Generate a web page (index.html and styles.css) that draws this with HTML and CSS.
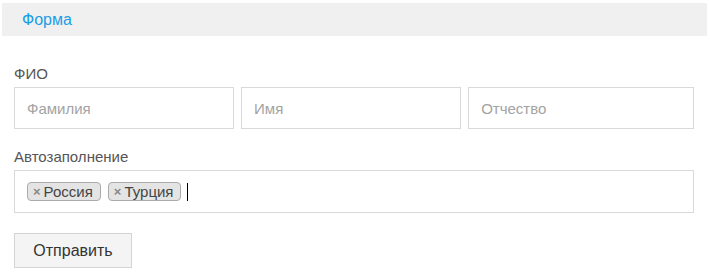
FILE: index.html
```html
<!DOCTYPE html>
<html lang="ru">
<head>
<meta charset="utf-8">
<link rel="stylesheet" href="styles.css">
</head>
<body>
<div class="tabbar"><span class="tab">Форма</span></div>
<form class="form">
  <div class="group fio">
    <div class="label">ФИО</div>
    <div class="row">
      <div class="input placeholder">Фамилия</div>
      <div class="input placeholder">Имя</div>
      <div class="input placeholder wide">Отчество</div>
    </div>
  </div>
  <div class="group auto">
    <div class="label">Автозаполнение</div>
    <div class="input tags">
      <span class="tag"><span class="x">×</span>Россия</span>
      <span class="tag"><span class="x">×</span>Турция</span>
      <span class="caret"></span>
    </div>
  </div>
  <div class="actions"><span class="btn">Отправить</span></div>
</form>
</body>
</html>
```
FILE: styles.css
```css
html, body { margin: 0; padding: 0; background: #fff; }
body { font-family: "Liberation Sans", Arial, sans-serif; font-size: 15px; color: #555; }
.tabbar { margin: 3px 3px 0 2px; height: 33px; background: #f0f0f0; display: flex; align-items: center; padding-left: 20px; }
.tab { color: #1a9ee6; font-size: 16px; }
.form { padding: 0 16px 0 14px; }
.group.fio { margin-top: 30px; }
.label { font-size: 15px; color: #555; line-height: 16px; height: 16px; margin-bottom: 5px; }
.row { display: flex; gap: 7px; }
.input { box-sizing: border-box; border: 1px solid #d9d9d9; height: 42px; display: flex; align-items: center; padding: 0 12px; flex: 1 1 0; }
.input.wide { flex: 1.03 1 0; }
.placeholder { color: #a3a3a3; font-size: 15px; }
.group.auto { margin-top: 20px; }
.input.tags { height: 43px; padding: 0 12px; gap: 7px; }
.tag { display: inline-flex; align-items: center; height: 19px; box-sizing: border-box; border: 1px solid #aaa; border-radius: 4px; background: #e4e4e4; color: #444; font-size: 15px; padding: 0 7px 0 5px; }
.tag .x { color: #888; font-size: 13px; font-weight: bold; margin-right: 3px; }
.caret { width: 1px; height: 18px; background: #000; margin-left: -1px; }
.actions { margin-top: 20px; }
.btn { display: inline-flex; align-items: center; justify-content: center; box-sizing: border-box; width: 118px; height: 35px; background: #f4f4f4; border: 1px solid #d4d4d4; color: #333; font-size: 16px; }
```
